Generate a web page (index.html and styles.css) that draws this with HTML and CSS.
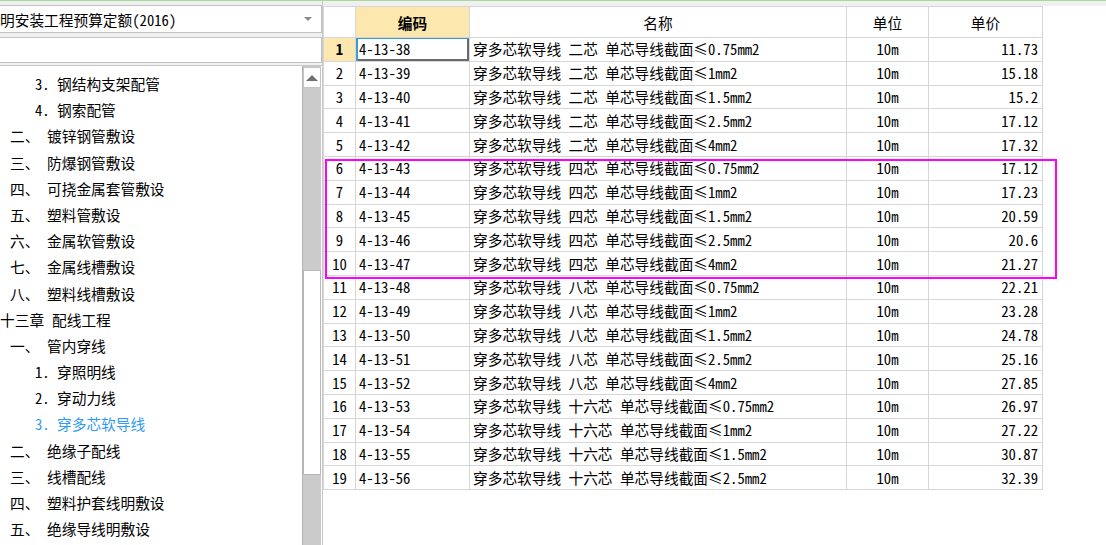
FILE: index.html
```html
<!DOCTYPE html>
<html lang="zh-CN">
<head>
    <meta charset="UTF-8" />
    <title>定额库</title>
    <link rel="stylesheet" href="styles.css">
</head>
<body>
<div class="app">
    <!-- 左侧：定额库 + 章节树 -->
    <div class="side">
        <div class="combo">
            <span class="combo-text">明安装工程预算定额(2016)</span>
            <span class="combo-arrow"></span>
        </div>
        <div class="search"></div>
        <div class="tree">
            <ul>
                <li class="l3"><span class="num">3.</span>钢结构支架配管</li>
                <li class="l3"><span class="num">4.</span>钢索配管</li>
                <li class="l2"><span class="num">二、</span>镀锌钢管敷设</li>
                <li class="l2"><span class="num">三、</span>防爆钢管敷设</li>
                <li class="l2"><span class="num">四、</span>可挠金属套管敷设</li>
                <li class="l2"><span class="num">五、</span>塑料管敷设</li>
                <li class="l2"><span class="num">六、</span>金属软管敷设</li>
                <li class="l2"><span class="num">七、</span>金属线槽敷设</li>
                <li class="l2"><span class="num">八、</span>塑料线槽敷设</li>
                <li class="l1"><span class="num">十三章</span>配线工程</li>
                <li class="l2"><span class="num">一、</span>管内穿线</li>
                <li class="l3"><span class="num">1.</span>穿照明线</li>
                <li class="l3"><span class="num">2.</span>穿动力线</li>
                <li class="l3 active"><span class="num">3.</span>穿多芯软导线</li>
                <li class="l2"><span class="num">二、</span>绝缘子配线</li>
                <li class="l2"><span class="num">三、</span>线槽配线</li>
                <li class="l2"><span class="num">四、</span>塑料护套线明敷设</li>
                <li class="l2"><span class="num">五、</span>绝缘导线明敷设</li>
            </ul>
            <div class="vscroll">
                <div class="vs-up"></div>
                <div class="vs-track"></div>
                <div class="vs-thumb"></div>
                <div class="vs-rest"></div>
            </div>
        </div>
    </div>

    <!-- 右侧：定额子目表 -->
    <div class="grid">
        <table>
            <colgroup>
                <col class="c-no">
                <col class="c-code">
                <col class="c-name">
                <col class="c-unit">
                <col class="c-price">
            </colgroup>
            <thead>
                <tr>
                    <th></th>
                    <th class="hl">编码</th>
                    <th>名称</th>
                    <th>单位</th>
                    <th>单价</th>
                </tr>
            </thead>
            <tbody>
                <tr><td class="no hl">1</td><td class="cur">4-13-38</td><td>穿多芯软导线 二芯 单芯导线截面≤0.75mm2</td><td class="unit">10m</td><td class="price">11.73</td></tr>
                <tr><td class="no">2</td><td>4-13-39</td><td>穿多芯软导线 二芯 单芯导线截面≤1mm2</td><td class="unit">10m</td><td class="price">15.18</td></tr>
                <tr><td class="no">3</td><td>4-13-40</td><td>穿多芯软导线 二芯 单芯导线截面≤1.5mm2</td><td class="unit">10m</td><td class="price">15.2</td></tr>
                <tr><td class="no">4</td><td>4-13-41</td><td>穿多芯软导线 二芯 单芯导线截面≤2.5mm2</td><td class="unit">10m</td><td class="price">17.12</td></tr>
                <tr><td class="no">5</td><td>4-13-42</td><td>穿多芯软导线 二芯 单芯导线截面≤4mm2</td><td class="unit">10m</td><td class="price">17.32</td></tr>
                <tr><td class="no">6</td><td>4-13-43</td><td>穿多芯软导线 四芯 单芯导线截面≤0.75mm2</td><td class="unit">10m</td><td class="price">17.12</td></tr>
                <tr><td class="no">7</td><td>4-13-44</td><td>穿多芯软导线 四芯 单芯导线截面≤1mm2</td><td class="unit">10m</td><td class="price">17.23</td></tr>
                <tr><td class="no">8</td><td>4-13-45</td><td>穿多芯软导线 四芯 单芯导线截面≤1.5mm2</td><td class="unit">10m</td><td class="price">20.59</td></tr>
                <tr><td class="no">9</td><td>4-13-46</td><td>穿多芯软导线 四芯 单芯导线截面≤2.5mm2</td><td class="unit">10m</td><td class="price">20.6</td></tr>
                <tr><td class="no">10</td><td>4-13-47</td><td>穿多芯软导线 四芯 单芯导线截面≤4mm2</td><td class="unit">10m</td><td class="price">21.27</td></tr>
                <tr><td class="no">11</td><td>4-13-48</td><td>穿多芯软导线 八芯 单芯导线截面≤0.75mm2</td><td class="unit">10m</td><td class="price">22.21</td></tr>
                <tr><td class="no">12</td><td>4-13-49</td><td>穿多芯软导线 八芯 单芯导线截面≤1mm2</td><td class="unit">10m</td><td class="price">23.28</td></tr>
                <tr><td class="no">13</td><td>4-13-50</td><td>穿多芯软导线 八芯 单芯导线截面≤1.5mm2</td><td class="unit">10m</td><td class="price">24.78</td></tr>
                <tr><td class="no">14</td><td>4-13-51</td><td>穿多芯软导线 八芯 单芯导线截面≤2.5mm2</td><td class="unit">10m</td><td class="price">25.16</td></tr>
                <tr><td class="no">15</td><td>4-13-52</td><td>穿多芯软导线 八芯 单芯导线截面≤4mm2</td><td class="unit">10m</td><td class="price">27.85</td></tr>
                <tr><td class="no">16</td><td>4-13-53</td><td>穿多芯软导线 十六芯 单芯导线截面≤0.75mm2</td><td class="unit">10m</td><td class="price">26.97</td></tr>
                <tr><td class="no">17</td><td>4-13-54</td><td>穿多芯软导线 十六芯 单芯导线截面≤1mm2</td><td class="unit">10m</td><td class="price">27.22</td></tr>
                <tr><td class="no">18</td><td>4-13-55</td><td>穿多芯软导线 十六芯 单芯导线截面≤1.5mm2</td><td class="unit">10m</td><td class="price">30.87</td></tr>
                <tr><td class="no">19</td><td>4-13-56</td><td>穿多芯软导线 十六芯 单芯导线截面≤2.5mm2</td><td class="unit">10m</td><td class="price">32.39</td></tr>
            </tbody>
        </table>
        <!-- 标注框 -->
        <div class="mark"></div>
    </div>
</div>
</body>
</html>
```

FILE: styles.css
```css
html, body {
    margin: 0;
    height: 545px;
    overflow: hidden;
}

body {
    background: #f0f0f0;
    border-top: 1px solid #a6d99c;
    font-family: "Noto Sans Mono CJK SC", "Noto Sans CJK SC", sans-serif;
    font-size: 14.7px;
    color: #000;
}

.app {
    display: flex;
    height: 544px;
}

/* ---------- left panel ---------- */
.side {
    width: 322px;
    flex: none;
    display: flex;
    flex-direction: column;
    padding-top: 4px;
    border-right: 1px solid #c8c8c8;
}

.combo {
    height: 28px;
    box-sizing: border-box;
    border: 1px solid #c2c2c2;
    border-left: none;
    background: #fff;
    display: flex;
    align-items: center;
    justify-content: space-between;
    padding-right: 9px;
}

.combo-text {
    white-space: nowrap;
}

.combo-arrow {
    width: 0;
    height: 0;
    border-left: 4px solid transparent;
    border-right: 4px solid transparent;
    border-top: 4px solid #8a8a8a;
}

.search {
    height: 26px;
    box-sizing: border-box;
    margin-top: 4px;
    border: 1px solid #c2c2c2;
    border-left: none;
    background: #fff;
}

.tree {
    flex: 1;
    min-height: 0;
    display: flex;
    margin-top: 2px;
    border-top: 1px solid #c8c8c8;
    background: #fff;
}

.tree ul {
    flex: 1;
    list-style: none;
    margin: 0;
    padding: 5px 0 0;
    overflow: hidden;
}

.tree li {
    height: 26.2px;
    line-height: 26.2px;
    white-space: nowrap;
}

.tree .num {
    display: inline-block;
}

.tree .l1 .num { width: 52px; }
.tree .l2 { padding-left: 10px; }
.tree .l2 .num { width: 37px; }
.tree .l3 { padding-left: 35px; }
.tree .l3 .num { width: 22px; }

.tree li.active {
    color: #2f9bf3;
}

.vscroll {
    width: 18px;
    margin-right: 1px;
    display: flex;
    flex-direction: column;
    background: #cbcbcb;
    border-left: 1px solid #b4b4b4;
}

.vs-up {
    height: 21px;
    margin-top: 1px;
    box-sizing: border-box;
    border: 1px solid #c4c4c4;
    background: #fff;
    display: flex;
    align-items: center;
    justify-content: center;
}

.vs-up::before {
    content: "";
    border-left: 6px solid transparent;
    border-right: 6px solid transparent;
    border-bottom: 6px solid #707070;
}

.vs-track {
    height: 182px;
}

.vs-thumb {
    height: 205px;
    box-sizing: border-box;
    background: #fff;
    border: 1px solid #b8b8b8;
}

.vs-rest {
    flex: 1;
}

/* ---------- right grid ---------- */
.grid {
    flex: 1;
    position: relative;
    background: #fff;
    margin-top: 5px;
}

table {
    border-collapse: collapse;
    table-layout: fixed;
    width: 719px;
}

.c-no { width: 32px; }
.c-code { width: 114px; }
.c-name { width: 377px; }
.c-unit { width: 82px; }
.c-price { width: 114px; }

th, td {
    border: 1px solid #d6d6d6;
    padding: 0 3px;
    white-space: nowrap;
    overflow: hidden;
}

th {
    height: 30px;
    font-weight: normal;
    text-align: center;
    background: #fff;
}

td {
    height: 22.8px;
    line-height: 20px;
    padding-top: 0;
    padding-bottom: 0;
}

th.hl, td.hl {
    background: #fce7ae;
    font-weight: bold;
}

td.no {
    text-align: center;
    padding: 0;
}

td.unit {
    text-align: center;
}

td.price {
    text-align: right;
    padding-right: 4px;
}

td.cur {
    box-shadow: inset 2px 1px 0 #3b9bd6, inset -2px -2px 0 #6a6a6a;
}

.mark {
    position: absolute;
    left: 2px;
    top: 153px;
    width: 732px;
    height: 120px;
    box-sizing: border-box;
    border: 2px solid #f0f;
}
```
